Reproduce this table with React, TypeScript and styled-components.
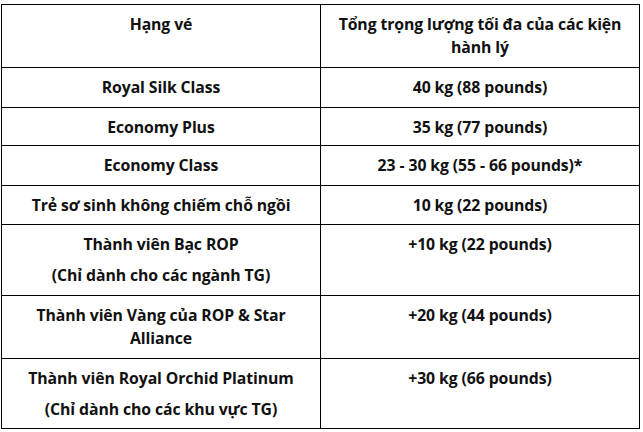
import React from "react";
import styled, { createGlobalStyle } from "styled-components";

const Global = createGlobalStyle`
  html, body { margin: 0; padding: 0; background: #ffffff; }
  body { font-family: "Open Sans", "Liberation Sans", sans-serif; }
`;

const Table = styled.div`
  margin: 4px 0 0 1px;
  width: 638px;
  display: grid;
  grid-template-columns: 319px 319px;
  border-top: 1px solid #000;
  border-left: 1px solid #000;
`;

const Cell = styled.div<{ $h: number }>`
  box-sizing: border-box;
  height: ${(p) => p.$h}px;
  border-right: 1px solid #000;
  border-bottom: 1px solid #000;
  padding: 8px 4px 0;
  text-align: center;
  font-family: "Open Sans", "Liberation Sans", sans-serif;
  font-weight: 700;
  font-size: 15.8px;
  line-height: 23px;
  letter-spacing: -0.1px;
  color: #111;
`;

const Para = styled.p`
  margin: 0 0 8px;
`;

type Row = { h: number; left: React.ReactNode; right: React.ReactNode };

const rows: Row[] = [
  { h: 40, left: "Royal Silk Class", right: "40 kg (88 pounds)" },
  { h: 38, left: "Economy Plus", right: "35 kg (77 pounds)" },
  { h: 40, left: "Economy Class", right: "23 - 30 kg (55 - 66 pounds)*" },
  { h: 39, left: "Trẻ sơ sinh không chiếm chỗ ngồi", right: "10 kg (22 pounds)" },
  {
    h: 71,
    left: (
      <>
        <Para>Thành viên Bạc ROP</Para>
        <Para>(Chỉ dành cho các ngành TG)</Para>
      </>
    ),
    right: "+10 kg (22 pounds)",
  },
  {
    h: 63,
    left: (
      <>
        Thành viên Vàng của ROP &amp; Star
        <br />
        Alliance
      </>
    ),
    right: "+20 kg (44 pounds)",
  },
  {
    h: 70,
    left: (
      <>
        <Para>Thành viên Royal Orchid Platinum</Para>
        <Para>(Chỉ dành cho các khu vực TG)</Para>
      </>
    ),
    right: "+30 kg (66 pounds)",
  },
];

export default function App() {
  return (
    <>
      <Global />
      <Table>
        <Cell $h={63}>Hạng vé</Cell>
        <Cell $h={63}>
          Tổng trọng lượng tối đa của các kiện
          <br />
          hành lý
        </Cell>
        {rows.map((r, i) => (
          <React.Fragment key={i}>
            <Cell $h={r.h}>{r.left}</Cell>
            <Cell $h={r.h}>{r.right}</Cell>
          </React.Fragment>
        ))}
      </Table>
    </>
  );
}
